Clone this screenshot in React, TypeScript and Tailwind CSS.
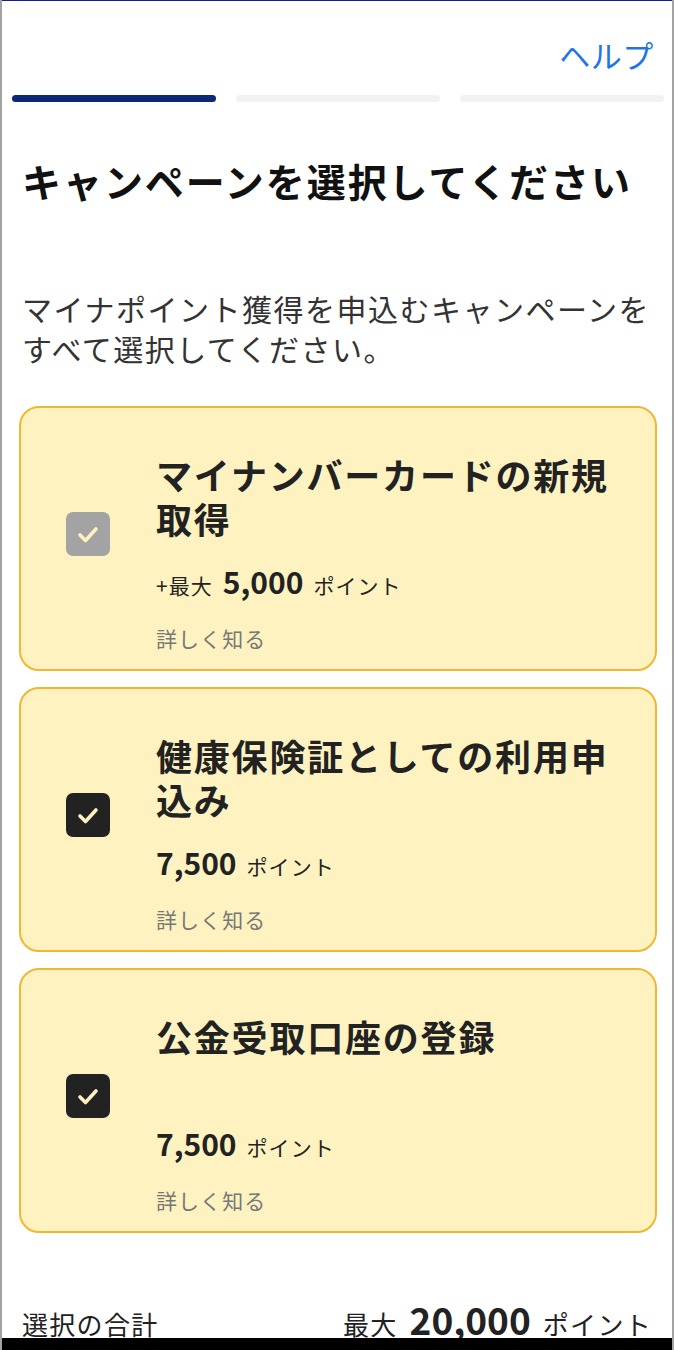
import React from "react";

type Campaign = {
  title: string;
  prefix?: string;
  points: string;
  disabled?: boolean;
};

const campaigns: Campaign[] = [
  { title: "マイナンバーカードの新規取得", prefix: "+最大", points: "5,000", disabled: true },
  { title: "健康保険証としての利用申込み", points: "7,500" },
  { title: "公金受取口座の登録", points: "7,500" },
];

function CheckBox({ disabled }: { disabled?: boolean }) {
  return (
    <div
      className={`w-[44px] h-[44px] shrink-0 mb-[9px] rounded-[7px] flex items-center justify-center ${
        disabled ? "bg-[#a3a3a3]" : "bg-[#222222]"
      }`}
    >
      <svg width="44" height="44" viewBox="0 0 44 44" fill="none">
        <polyline
          points="14,23 19.5,28.5 30,17"
          stroke="#fdf1bd"
          strokeWidth="3.6"
          strokeLinecap="round"
          strokeLinejoin="round"
        />
      </svg>
    </div>
  );
}

function CampaignCard({ c }: { c: Campaign }) {
  return (
    <div className="ml-[17px] mr-[15px] h-[265px] rounded-[20px] border-2 border-[#f0b832] bg-[#fef3c0] flex items-center pl-[45px] pr-[30px]">
      <CheckBox disabled={c.disabled} />
      <div className="ml-[46px] flex-1 flex flex-col self-stretch pt-[44px]">
        <h2 className="text-[36px] leading-[44px] font-bold tracking-[0.05em] text-[#222] min-h-[88px]">
          {c.title}
        </h2>
        <div className="mt-[19px] flex items-baseline text-[#222] h-[42px]">
          {c.prefix && (
            <span className="text-[21px] tracking-[0.05em] mr-[10px]">{c.prefix}</span>
          )}
          <span className="text-[30px] font-bold">{c.points}</span>
          <span className="text-[21px] tracking-[0.05em] ml-[10px]">ポイント</span>
        </div>
        <a className="mt-[21px] text-[21px] leading-[32px] tracking-[0.05em] text-[#777]">詳しく知る</a>
      </div>
    </div>
  );
}

export default function App() {
  return (
    <div
      className="relative w-[674px] h-[1350px] overflow-hidden bg-white border-l-2 border-r-2 border-[#a3a3a3]"
      style={{ fontFamily: '"Noto Sans CJK JP", "Noto Sans", sans-serif' }}
    >
      <div className="h-px bg-[#1a1a9c]" />
      <div className="flex justify-end pr-[18px] pt-[34px]">
        <a className="text-[31px] leading-[40px] tracking-[0.02em] text-[#1f74e6]">ヘルプ</a>
      </div>
      <div className="flex gap-[20px] pl-[10px] pr-[8px] mt-[20px]">
        <div className="flex-1 h-[7px] rounded-full bg-[#0b2777]" />
        <div className="flex-1 h-[7px] rounded-full bg-[#f2f2f2]" />
        <div className="flex-1 h-[7px] rounded-full bg-[#f2f2f2]" />
      </div>
      <h1 className="mt-[52px] pl-[20px] text-[39px] leading-[52px] font-bold tracking-[0.05em] text-[#111]">
        キャンペーンを選択してください
      </h1>
      <p className="mt-[82px] pl-[20px] pr-[10px] text-[30px] leading-[40px] tracking-[0.05em] text-[#333]">
        マイナポイント獲得を申込むキャンペーンをすべて選択してください。
      </p>
      <div className="mt-[38px] flex flex-col gap-[16px]">
        {campaigns.map((c) => (
          <CampaignCard key={c.title} c={c} />
        ))}
      </div>
      <div className="mt-[62px] px-[20px] flex justify-between items-baseline text-[#222]">
        <span className="text-[26px] tracking-[0.05em]">選択の合計</span>
        <div className="flex items-baseline">
          <span className="text-[26px] tracking-[0.05em]">最大</span>
          <span className="text-[37px] font-bold ml-[12px] leading-[48px]">20,000</span>
          <span className="text-[26px] tracking-[0.05em] ml-[12px]">ポイント</span>
        </div>
      </div>
      <div className="absolute left-0 right-0 bottom-0 h-[12px] bg-black" />
    </div>
  );
}
